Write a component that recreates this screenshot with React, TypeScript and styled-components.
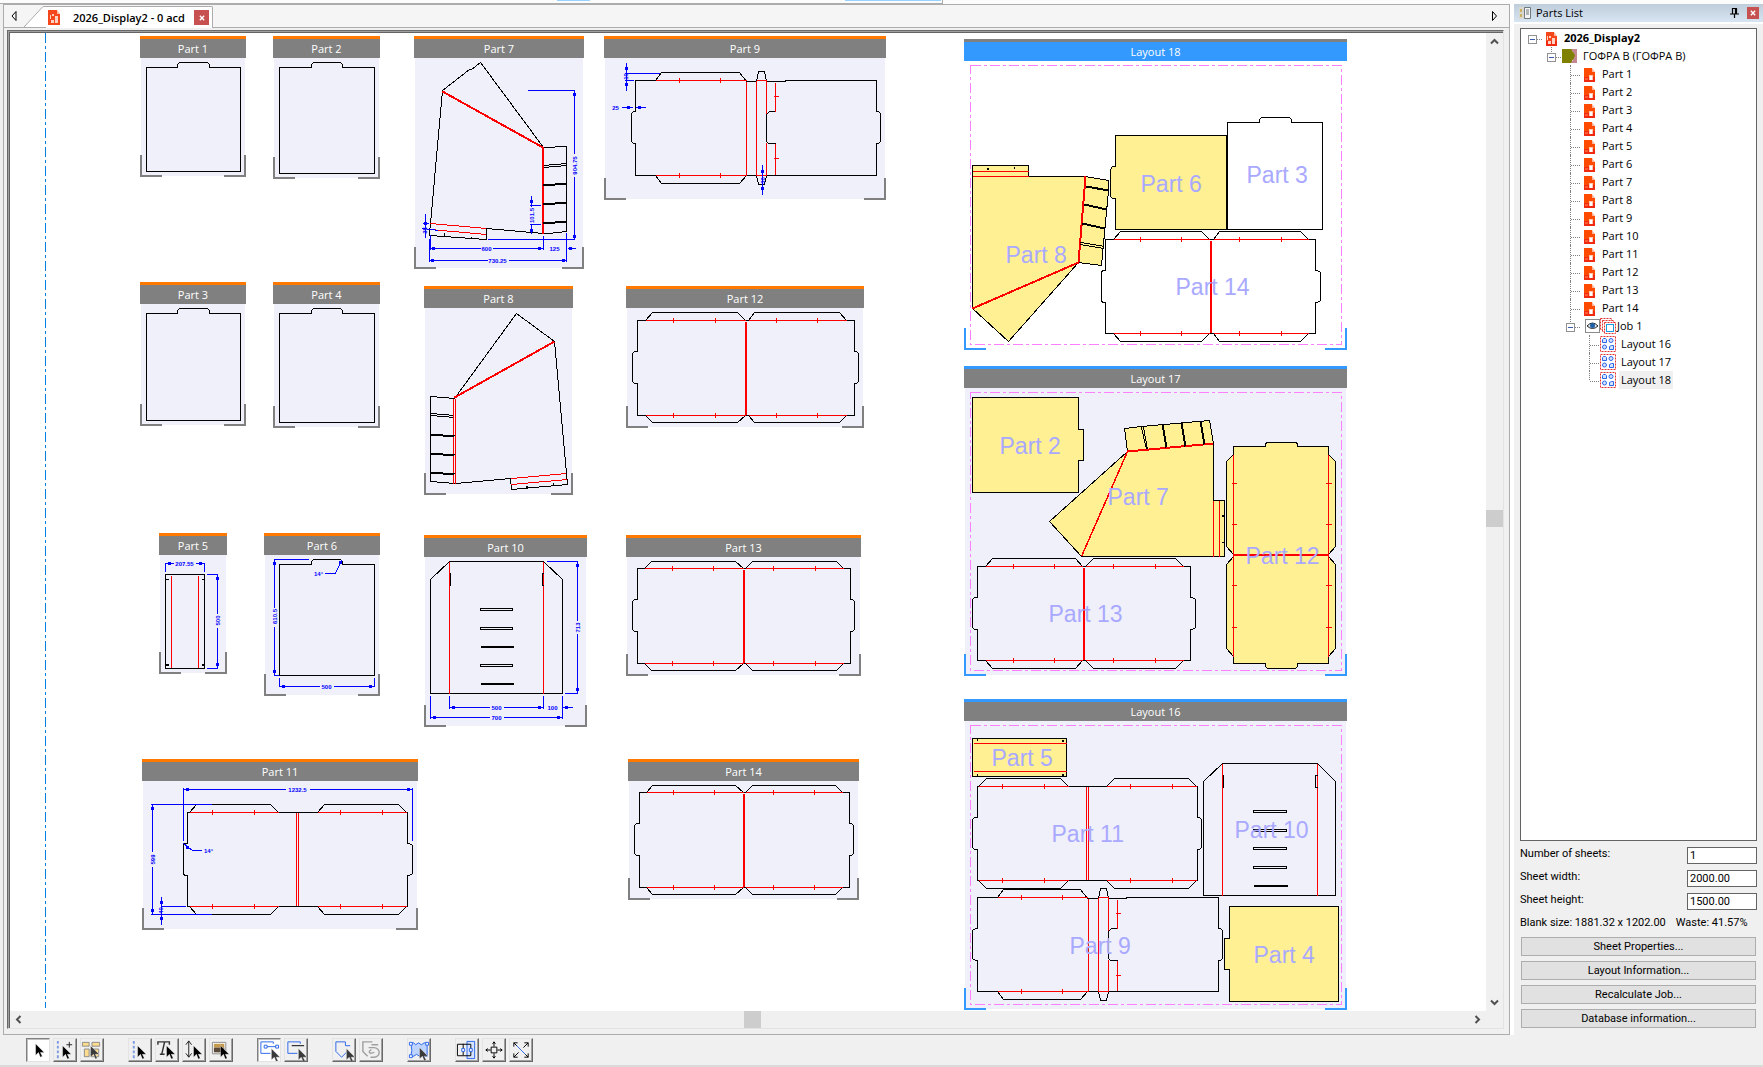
import React from "react";
import styled, { createGlobalStyle, css } from "styled-components";

const UI = `"Open Sans", "Noto Sans", sans-serif`;
const FORM = `Roboto, "Liberation Sans", sans-serif`;
const EDGE = "#acacac";
const FACE = "#f0f0f0";
const BLUE = "#3399ff";
const YELLOW = "#fff094";

const Global = createGlobalStyle`
  *, *::before, *::after { box-sizing: border-box; }
  body { margin: 0; background: ${FACE}; font: 11px/18px ${UI}; color: #000; }
  button, input { font: inherit; color: inherit; margin: 0; padding: 0; border-radius: 0; }
  ul { list-style: none; margin: 0; padding: 0; }
`;

/* ---------- window frame ---------- */

const Page = styled.div`
  display: flex;
  flex-direction: column;
  height: 100vh;
  overflow: hidden;
`;
const TopStrip = styled.div`
  flex: none;
  height: 4px;
  display: flex;
  background: #fcfcfc;
`;
const Docked = styled.div`
  flex: none;
  width: 943px;
  padding-left: 557px;
  display: flex;
  gap: 255px;
  border: solid ${EDGE};
  border-width: 0 1px 1px 0;
`;
const Hot = styled.i<{ $w: number }>`
  width: ${(p) => p.$w}px;
  height: 1px;
  background: #99d1ff;
`;
const Body = styled.div`
  flex: 1;
  min-height: 0;
  display: flex;
`;
const Doc = styled.main`
  flex: 1;
  min-width: 0;
  margin-left: 3px;
  display: flex;
  flex-direction: column;
  border: 1px solid ${EDGE};
  background: ${FACE};
`;
const TabBar = styled.div`
  flex: none;
  height: 23px;
  display: flex;
  align-items: stretch;
  padding-right: 4px;
  background: #f5f5f5;
  border-bottom: 1px solid ${EDGE};
`;
const TabArrow = styled.button`
  width: 20px;
  border: 0;
  background: none;
  display: grid;
  place-items: center;
`;
const Slant = styled.svg`
  flex: none;
  align-self: flex-end;
`;
const Tab = styled.div`
  display: flex;
  align-items: center;
  height: 22px;
  margin: 1px auto 0 0;
  padding: 0 3px 0 2px;
  background: #fff;
  border: solid ${EDGE};
  border-width: 1px 1px 0 0;
  border-radius: 0 2px 0 0;
  font-weight: 600;
`;
const TabTitle = styled.span`
  width: 121px;
  margin-left: 13px;
  white-space: nowrap;
`;
const Close = styled.button<{ $s: number }>`
  width: ${(p) => p.$s}px;
  height: ${(p) => p.$s}px;
  border: 0;
  background: #c75050;
  display: grid;
  place-items: center;
`;
const Frame = styled.div`
  flex: 1;
  min-height: 0;
  margin: 2px 5px 5px 3px;
  padding: 1px 0 0 1px;
  background: #a0a0a0;
  border: 1px solid;
  border-color: #696969 #e3e3e3 #e3e3e3 #696969;
  display: flex;
`;
const Viewport = styled.div`
  flex: 1;
  min-width: 0;
  display: grid;
  grid-template: minmax(0, 1fr) 17px / minmax(0, 1fr) 17px;
  border: solid #646464;
  border-width: 1px 0 0 1px;
  background: ${FACE};
`;
const Canvas = styled.div`
  position: relative;
  overflow: hidden;
  background: #fff;
`;
const Scroll = styled.div<{ $v?: boolean }>`
  display: flex;
  flex-direction: ${(p) => (p.$v ? "column" : "row")};
  justify-content: space-between;
  align-items: center;
  background: ${FACE};
  button {
    width: 17px;
    height: 17px;
    border: 0;
    background: none;
    display: grid;
    place-items: center;
  }
`;
const Track = styled.div<{ $v?: boolean; $at: number }>`
  flex: 1;
  align-self: stretch;
  display: flex;
  flex-direction: ${(p) => (p.$v ? "column" : "row")};
  &::before { content: ""; flex: ${(p) => p.$at}; }
  &::after { content: ""; flex: ${(p) => 1000 - p.$at}; }
`;
const Thumb = styled.i`
  flex: none;
  width: 17px;
  height: 17px;
  background: #cdcdcd;
`;

/* ---------- canvas items ---------- */

const VIEW_X = 10;
const VIEW_Y = 33;

const Guide = styled.svg`
  position: absolute;
  left: 35px;
  top: 0;
`;
const CardBox = styled.section<{ $x: number; $y: number; $w: number; $h: number }>`
  position: absolute;
  left: ${(p) => p.$x - VIEW_X}px;
  top: ${(p) => p.$y - VIEW_Y}px;
  width: ${(p) => p.$w}px;
  height: ${(p) => p.$h}px;
`;
const CardTitle = styled.h2<{ $strip: string; $bar: string }>`
  margin: 0;
  height: 22px;
  border-top: 3px solid ${(p) => p.$strip};
  background: ${(p) => p.$bar};
  color: #fff;
  font-size: 11px;
  font-weight: 400;
  line-height: 20px;
  text-align: center;
`;
const Drawing = styled.svg`
  display: block;
  shape-rendering: crispEdges;
  fill: none;
  stroke-width: 1px;
`;
const BigLabel = styled.text`
  font: 23px "Liberation Sans", Arial, sans-serif;
  fill: #a9a9ff;
  stroke: none;
`;
const TinyLabel = styled.text`
  font: bold 6px "Liberation Sans", Arial, sans-serif;
  fill: #0000ff;
  stroke: none;
  text-anchor: middle;
`;

type CardProps = {
  name: string; x: number; y: number; r: number; b: number;
  kind?: "part" | "layout" | "active"; children?: React.ReactNode;
};

function Card({ name, x, y, r, b, kind = "part", children }: CardProps) {
  const w = r - x;
  const h = b - y;
  const top = y + 22;
  const mark = kind === "part" ? "#808080" : BLUE;
  const strip = kind === "part" ? "#ff7800" : kind === "active" ? "#808080" : BLUE;
  return (
    <CardBox $x={x} $y={y} $w={w} $h={h}>
      <CardTitle $strip={strip} $bar={kind === "active" ? BLUE : "#808080"}>{name}</CardTitle>
      <Drawing width={w} height={h - 22} viewBox={`${x} ${top} ${w} ${h - 22}`}>
        <rect x={x + 1} y={top} width={w - 2} height={h - 23} fill={kind === "active" ? "#fff" : "#f0f0fa"} />
        <path
          d={`M${x + 1} ${b - 22}V${b - 1}H${x + 22}M${r - 1} ${b - 22}V${b - 1}H${r - 22}`}
          stroke={mark}
          strokeWidth={2}
        />
        <g transform="translate(.5 .5)">
          {kind !== "part" && (
            <rect x={x + 6} y={y + 26} width={371} height={b - y - 32} stroke="#ff80ff" strokeDasharray="10 3 3 3" />
          )}
          {children}
        </g>
      </Drawing>
    </CardBox>
  );
}

const K = ({ d, f }: { d: string; f?: string }) => <path d={d} stroke="#000" fill={f || "none"} />;
const K2 = ({ d }: { d: string }) => <path d={d} stroke="#000" strokeWidth={2} />;
const R = ({ d }: { d: string }) => <path d={d} stroke="#f00" />;
const R2 = ({ d }: { d: string }) => <path d={d} stroke="#f00" strokeWidth={2} />;

/* dimension lines: path, square arrow heads, values */
type Dim = { d: string; heads?: number[][]; text?: [string, number, number, boolean?][] };
function Dims({ d, heads = [], text = [] }: Dim) {
  return (
    <g>
      <path d={d} stroke="#00f" />
      {heads.map(([x, y], i) => (
        <rect key={i} x={x - 1.5} y={y - 1.5} width={3} height={3} fill="#00f" />
      ))}
      {text.map(([t, x, y, up], i) => (
        <TinyLabel key={i} transform={up ? `translate(${x + 2} ${y}) rotate(-90)` : `translate(${x} ${y + 2})`}>{t}</TinyLabel>
      ))}
    </g>
  );
}

/* rectangular blank with one rounded tab on its top edge */
function Blank({ l, t, r, b, a, z }: { l: number; t: number; r: number; b: number; a: number; z: number }) {
  return <K d={`M${l} ${t}H${a}V${t - 3}L${a + 2} ${t - 5}H${z - 2}L${z} ${t - 3}V${t}H${r}V${b}H${l}Z`} />;
}

/* blank made of two panels with flaps above and below */
type Double = {
  x: [number, number, number, number]; y: [number, number, number, number, number, number];
  flaps: number[]; ticks: number[]; mid: number; gap?: boolean;
};
function DoublePanel({ x: [tl, l, r, tr], y: [ft, t, a, z, b, fb], flaps: f, ticks, mid, gap }: Double) {
  return (
    <g>
      <K d={`M${f[0]} ${t}H${l}V${a}H${l - 3}L${tl} ${a + 2}V${z - 2}L${l - 3} ${z}H${l}V${b}H${f[0]}`} />
      <K d={`M${f[7]} ${t}H${r}V${a}H${r + 2}L${tr} ${a + 2}V${z - 2}L${r + 2} ${z}H${r}V${b}H${f[7]}`} />
      <K d={`M${f[0]} ${t}L${f[1]} ${ft}H${f[2]}L${f[3]} ${t}H${f[4]}L${f[5]} ${ft}H${f[6]}L${f[7]} ${t}`} />
      <K d={`M${f[0]} ${b}L${f[1]} ${fb}H${f[2]}L${f[3]} ${b}H${f[4]}L${f[5]} ${fb}H${f[6]}L${f[7]} ${b}`} />
      <R d={`M${f[0]} ${t}H${f[3]}M${f[4]} ${t}H${f[7]}M${f[0]} ${b}H${f[3]}M${f[4]} ${b}H${f[7]}`} />
      <R d={ticks.map((v) => `M${v} ${t - 3}v5M${v} ${b - 3}v5`).join("")} />
      {gap ? <R d={`M${mid} ${t}V${b - 1}M${mid + 2} ${t}V${b - 1}`} /> : <R2 d={`M${mid + 0.5} ${t + 1}V${b - 1}`} />}
    </g>
  );
}

type Spine = { t: number; l: number; tl: number; r: number; tr: number; b: number; c: number[]; f: number[]; ticks: number[]; step: number };
/* two panels joined by a narrow spine */
function SpinePanel({ t, l, tl, r, tr, b, c, f, ticks, step }: Spine) {
  const a = t + 31;
  const z = t + 63;
  const [c1, c2, c3, c4] = c;
  return (
    <g>
      <K d={`M${f[0]} ${t}H${l}V${a}H${l - 2}L${tl} ${a + 2}V${z - 2}L${l - 2} ${z}H${l}V${b}H${f[0]}L${f[1]} ${b + 8}H${f[2]}L${f[3]} ${b}H${c2}l2 9h6L${c3} ${b}H${step}H${r}V${z}H${r + 2}L${tr} ${z - 2}V${a + 2}L${r + 2} ${a}H${r}V${t}H${step}V${t + 1}H${c3}l-2 -10h-6L${c2} ${t + 1}H${f[3]}L${f[2]} ${t - 8}H${f[1]}Z`} />
      <K d={`M${c4} ${a}H${c3 + 3}L${c3} ${a + 3}V${z - 2}L${c3 + 2} ${z}H${c4}`} />
      <R d={`M${f[0]} ${t}H${f[3]}M${f[0]} ${b}H${f[3]}M${c1} ${t + 1}V${b}M${c2} ${t}V${b}M${c3} ${t}V${a + 2}M${c3} ${z - 1}V${b}M${c2} ${t}H${c3}M${c2} ${b}H${c3}M${c4} ${t + 2}V${a}M${c4} ${z}V${b - 1}M${c4 - 2} ${t + 16}h5M${c4 - 2} ${t + 78}h5`} />
      <R d={ticks.map((v) => `M${v} ${t - 3}v5M${v} ${b - 3}v5`).join("")} />
    </g>
  );
}

/* ---------- glyphs ---------- */

const PageGlyph = ({ root }: { root?: boolean }) => (
  <svg width="18" height="18" viewBox="0 0 18 18" aria-hidden="true">
    <path d="M4 3h8v4h3v10H4z" fill={root ? "#f4481c" : "#ff4a00"} />
    <path d="M4 12h11v5H4z" fill="#f02a10" />
    <path d="M12 3l3 4h-3z" fill="#ffb49b" />
    {root ? (
      <path d="M5 7h1v4H5zM7 7h2v2H7zM6 12h3v3H6zM10 9h3v6h-3z" fill="#ffd2c4" />
    ) : (
      <>
        <path d="M9 10h4v5H9z" fill="#ffc8b4" />
        <path d="M10 11h2v4h-2z" fill="#fff" />
        <path d="M5 13h3v2H5z" fill="#ff5a30" />
      </>
    )}
  </svg>
);
const BoardGlyph = () => (
  <svg width="18" height="18" viewBox="0 0 18 18" aria-hidden="true">
    <path d="M10 3h6M12 5h4M11 7h5M12 9h4M12 11h4M12 13h4M10 15h6" stroke="#8b1020" strokeWidth="1" />
    <path d="M1 2h9l2 3 2 3-1 3-2 3-1 2H1z" fill="#808000" />
  </svg>
);
const EyeGlyph = () => (
  <svg width="20" height="18" viewBox="0 0 20 18" aria-hidden="true">
    <rect x="5.500" y="2.500" width="14" height="13" fill="#fff" stroke="#8a8a8a" />
    <path d="M7 9q5.500-6 11 0q-5.500 5-11 0z" fill="#dfe9f2" stroke="#222" />
    <circle cx="12.500" cy="8.500" r="2.500" fill="#1f5fa8" />
  </svg>
);
const JobGlyph = () => (
  <svg width="17" height="18" viewBox="0 0 17 18" aria-hidden="true">
    <g fill="#fff" stroke="#e03030" strokeDasharray="2 1">
      <rect x="0.500" y="1.500" width="11" height="11" />
      <rect x="2.500" y="3.500" width="11" height="11" />
      <rect x="4.500" y="5.500" width="11" height="11" />
    </g>
    <rect x="6.500" y="7.500" width="7" height="7" fill="#fff" stroke="#1a9be0" />
  </svg>
);
const LayoutGlyph = () => (
  <svg width="18" height="18" viewBox="0 0 18 18" aria-hidden="true">
    <rect x="1.500" y="1.500" width="15" height="15" fill="#fff" stroke="#e03030" strokeDasharray="2 1" />
    <g fill="#d5e3ff" stroke="#2a66e8">
      <path d="M3.500 7.500v-3l1-1h2l1 1v3z" />
      <circle cx="12" cy="5.500" r="2" />
      <circle cx="5.500" cy="12" r="2" />
      <path d="M10.500 14.500v-3l2-1h2v4z" />
    </g>
  </svg>
);
const Cross = ({ s = 7 }: { s?: number }) => (
  <svg width={s} height={s} viewBox="0 0 7 7" aria-hidden="true">
    <path d="M1 1l5 5M6 1l-5 5" stroke="#fff" strokeWidth="1.600" />
  </svg>
);
const Chevron = ({ turn }: { turn: number }) => (
  <svg width="9" height="9" viewBox="0 0 9 9" aria-hidden="true">
    <path d="M1 6.500l3.500-3.500 3.500 3.500" transform={`rotate(${turn} 4.500 4.500)`} fill="none" stroke="#505050" strokeWidth="2" />
  </svg>
);
const Tri = ({ flip }: { flip?: boolean }) => (
  <svg width="6" height="10" viewBox="0 0 6 10" aria-hidden="true">
    <path d={flip ? "M.5 .5l4 4.500-4 4.500z" : "M5 .5L1 5l4 4.500z"} fill="none" stroke="#000" />
  </svg>
);

/* ---------- parts list ---------- */

const Side = styled.aside`
  flex: none;
  width: 253px;
  display: flex;
  flex-direction: column;
  border-left: 4px solid #fff;
`;
const SideHead = styled.header`
  flex: none;
  height: 20px;
  display: flex;
  align-items: center;
  padding: 0 4px 0 5px;
  background: linear-gradient(#bfcddb, #d7e4f2);
  border-bottom: 2px solid #fff;
`;
const SideTitle = styled.h1`
  margin: 0 auto 0 5px;
  font-size: 11px;
  font-weight: 400;
`;
const PinButton = styled.button`
  width: 12px;
  height: 14px;
  margin-right: 7px;
  border: 0;
  background: none;
  line-height: 0;
`;
const Tree = styled.ul`
  flex: 1;
  min-height: 0;
  margin: 4px 6px 6px;
  padding-left: 2px;
  border: 1px solid #646464;
  background: #fff;
`;
const Node = styled.li<{ $level: number }>`
  display: flex;
  height: 18px;
  padding-left: ${(p) => p.$level * 19}px;
`;
const Link = styled.span<{ $line: "none" | "half" | "full" }>`
  position: relative;
  width: 19px;
  flex: none;
  display: grid;
  place-items: center;
  &::before {
    content: "";
    position: absolute;
    left: 9px;
    top: 0;
    height: ${(p) => (p.$line === "full" ? 18 : p.$line === "half" ? 9 : 0)}px;
    border-left: 1px dotted #808080;
  }
  &::after {
    content: "";
    position: absolute;
    left: 10px;
    right: 0;
    top: 10px;
    border-top: 1px dotted #808080;
  }
`;
const Expander = styled.button`
  position: relative;
  z-index: 1;
  width: 9px;
  height: 9px;
  margin-top: 2px;
  border: 1px solid #919191;
  background: #fff;
  &::before {
    content: "";
    display: block;
    width: 5px;
    margin: 0 auto;
    border-top: 1px solid #3b5ca8;
  }
`;
const NodeText = styled.span<{ $bold?: boolean; $on?: boolean; $tight?: boolean }>`
  padding: ${(p) => (p.$tight ? "0" : "0 2px")};
  margin-left: ${(p) => (p.$tight ? 0 : 2)}px;
  white-space: nowrap;
  ${(p) => p.$bold && css`font-weight: 700;`}
  ${(p) => p.$on && css`background: ${FACE};`}
`;
const Form = styled.form`
  flex: none;
  padding: 0 6px 2px;
  font-family: ${FORM};
`;
const Field = styled.label`
  display: flex;
  justify-content: space-between;
  height: 23px;
  line-height: 14px;
  input {
    width: 70px;
    height: 17px;
    padding: 0 2px;
    border: 1px solid #646464;
    background: #fff;
  }
`;
const Stats = styled.div`
  display: flex;
  gap: 10px;
  height: 21px;
  line-height: 14px;
  white-space: nowrap;
`;
const Push = styled.button`
  display: block;
  width: calc(100% - 2px);
  height: 19px;
  border: 1px solid #adadad;
  background: #e1e1e1;
  line-height: 17px;
  && { margin: 0 1px 5px; }
`;

/* ---------- bottom toolbar ---------- */

const Toolbar = styled.div`
  flex: none;
  height: 32px;
  display: flex;
  gap: 24px;
  padding: 3px 0 0 26px;
  border-bottom: 2px solid #dadada;
`;
const Group = styled.div`
  display: flex;
  gap: 3px;
`;
const Tool = styled.button<{ $on?: boolean }>`
  width: 24px;
  height: 24px;
  border: 1px solid;
  border-color: ${(p) => (p.$on ? "#808080 #e3e3e3 #e3e3e3 #808080" : "#e3e3e3 #696969 #696969 #e3e3e3")};
  box-shadow: inset ${(p) => (p.$on ? "1px 1px 0 #c0c0c0" : "-1px -1px 0 #a0a0a0")};
  background: ${(p) => (p.$on ? "#fff" : FACE)};
  line-height: 0;
`;

const Cursor = ({ x = 0, y = 0, gray }: { x?: number; y?: number; gray?: boolean }) => (
  <path transform={`translate(${x} ${y})`} d="M9 5v12l3-3 2 5 2-1-2-4h4z" fill={gray ? "#3a3a3a" : "#000"} stroke="#fff" strokeWidth=".4" />
);
const tools: { name: string; on?: boolean; art: React.ReactNode }[][] = [
  [
    { name: "Select", on: true, art: <Cursor /> },
    { name: "Add to selection", art: <><path d="M4 2v19" stroke="#7c9be0" strokeWidth="2" strokeDasharray="3 2" /><Cursor y={2} /><path d="M16 3v6M13 6h6" stroke="#222" /></> },
    { name: "Select parts", art: <><g fill="#fddc8c" stroke="#8a8a8a"><path d="M1.500 3.500h7v4h-7zM11.500 3.500h8v4h-8zM3.500 10.500h5v8h-5zM10.500 10.500h8v8h-8z" /></g><Cursor x={1} y={2} gray /></> },
  ],
  [
    { name: "Select lines", art: <><path d="M5 2v19" stroke="#7c9be0" strokeWidth="2" strokeDasharray="3 2" /><Cursor y={2} /></> },
    { name: "Select text", art: <><path d="M2 6V3h12v3M9 3L6 16M4 16h5" stroke="#333" strokeWidth="1.500" fill="none" /><Cursor x={2} y={2} /></> },
    { name: "Select dimensions", art: <><path d="M6 2v17M3 6l3-4 3 4M3 15l3 4 3-4" stroke="#222" fill="none" /><Cursor x={2} y={2} /></> },
    { name: "Select pictures", art: <><path d="M2.500 3.500h14v12h-14z" fill="#fff" stroke="#888" /><path d="M4 5h11v4H4z" fill="#c69a4c" /><path d="M4 9h11v5H4z" fill="#5a4a3a" /><Cursor x={2} y={2} /></> },
  ],
  [
    { name: "Pick edge", on: true, art: <><path d="M16 5V3H3v12h10" stroke="#2a66e8" fill="none" /><path d="M8 8h12" stroke="#2a66e8" /><path d="M6.500 6.500h3v3h-3zM18.500 6.500h3v3h-3z" fill="#fff" stroke="#2a66e8" /><Cursor x={5} y={5} gray /></> },
    { name: "Pick line", art: <><path d="M16 5V3H3v12h10" stroke="#2a66e8" fill="none" /><path d="M7 7h13" stroke="#000" /><Cursor x={5} y={5} gray /></> },
  ],
  [
    { name: "Pick contour", art: <><path d="M13 7V3H3v10l6 6 5-5M13 7h5" stroke="#2a66e8" fill="none" /><Cursor x={5} y={5} gray /></> },
    { name: "Reverse contour", art: <path d="M13 3H3v10l5 5M12 6h7M9 9h6q5 1 5 5t-5 5h-4M12 11q-4 2-1 4l4-1" stroke="#a0a0a0" fill="none" strokeWidth="1.500" /> },
  ],
  [{ name: "Select area", art: <><path d="M3 4h3l2 2 3-2 3 2 3-2h3v14h-3l-2-2-3 2-3-2-3 2H3l1-6z" fill="#bcd4ff" stroke="#2a66e8" /><path d="M1.500 3.500h3v3h-3zM18.500 3.500h3v3h-3zM1.500 16.500h3v3h-3z" fill="#fff" stroke="#2a66e8" /><Cursor x={3} y={4} gray /></> }],
  [
    { name: "Fit selection", art: <><path d="M11.500 2.500h8v18h-8z" fill="#d5e3ff" stroke="#2a66e8" /><path d="M1.500 5.500h14v12h-14zM7.500 5v12" fill="none" stroke="#000" /><path d="M6 10h3v3H6zM14 10h3v3h-3z" fill="#fff" stroke="#2a66e8" /></> },
    { name: "Center view", art: <><path d="M8.500 8.500h6v6h-6z" fill="none" stroke="#000" /><path d="M11.500 3v5M11.500 15v5M3 11.500h5M15 11.500h5M10 5l1.500-2 1.500 2M10 18l1.500 2 1.500-2M5 10l-2 1.500 2 1.500M18 10l2 1.500-2 1.500" fill="none" stroke="#000" /></> },
    { name: "Fit all", art: <><path d="M6 6l10 10" stroke="#2a66e8" /><path d="M4 8V4h4M15 4h4v4M4 15v4h4M19 15v4h-4M4 4l3 3M19 4l-5 5M4 19l5-5M19 19l-3-3" fill="none" stroke="#000" /></> },
  ],
];

const partNames = Array.from({ length: 14 }, (_, i) => `Part ${i + 1}`);

function Cards() {
  return (
    <>
      <Card name="Part 1" x={140} y={36} r={246} b={177}><Blank l={146} t={67} r={240} b={171} a={177} z={209} /></Card>
      <Card name="Part 2" x={273} y={36} r={380} b={179}><Blank l={279} t={67} r={374} b={173} a={311} z={342} /></Card>
      <Card name="Part 3" x={140} y={282} r={246} b={426}><Blank l={146} t={313} r={240} b={420} a={177} z={209} /></Card>
      <Card name="Part 4" x={273} y={282} r={380} b={428}><Blank l={279} t={313} r={374} b={422} a={311} z={342} /></Card>

      <Card name="Part 7" x={414} y={36} r={584} b={269}>
        <K d="M442 90L469 69L471 69L480 62L543 147L566 146V231L548 233L543 233L486 228V239L429 235V233L430 223Z" />
        <K d="M543 165L566 163M543 167L566 165M444 232v4M471 236v2" />
        <R d="M430 223L486 228M430 229L486 234" />
        <R2 d="M442 91L542.500 147V233" />
        <K2 d="M543 185L566 183M543 204L566 202M543 223L566 221" />
        <Dims
          d="M527 90H574V153M574 176V239H487M430 234V249M543 235V249M430 248H480M492 248H543M567 248H575M429 238V261M566 232V261M429 260H487M508 260H566M425 213V237M422 223H428M422 228L438 230M531 195V206M529 205H540M529 224H540M531 224V233"
          heads={[[574, 94], [574, 236], [433, 248], [539, 248], [570, 248], [432, 260], [563, 260], [425, 223], [531, 201], [531, 230]]}
          text={[["600", 486, 248], ["125", 554, 248], ["730.25", 497, 260], ["904.75", 574, 165, true], ["101.5", 531, 215, true], ["35", 424, 230, true]]}
        />
      </Card>

      <Card name="Part 9" x={604} y={36} r={886} b={200}>
        <SpinePanel t={80} l={635} tl={631} r={876} tr={880} b={175} c={[746, 756, 766, 775]} f={[655, 661, 739, 746]} ticks={[679, 720]} step={785} />
        <Dims
          d="M626 62V90M624 73H659M624 80H633M621 107H632M635 107H645M762 164V194"
          heads={[[626, 68], [626, 84], [628, 107], [639, 107], [762, 171], [762, 188]]}
          text={[["10", 625, 76, true], ["25", 615, 107], ["30", 762, 180, true]]}
        />
      </Card>

      <Card name="Part 8" x={424} y={286} r={573} b={495}>
        <K d="M516 313L554 341L566 473L567 484L511 489L510 478L455 483L430 481V396L454 398Z" />
        <K d="M430 413L454 415M430 415L454 417M553 482v3" />
        <R d="M511 478L566 473M511 484L567 479M453 398V483M455 398V483" />
        <R2 d="M454 397L554 341" />
        <K2 d="M430 434L454 436M430 453L454 455M430 472L454 474M526 485v3" />
      </Card>

      <Card name="Part 12" x={626} y={286} r={864} b={428}>
        <DoublePanel x={[632, 637, 854, 858]} y={[312, 320, 351, 383, 415, 422]} flaps={[645, 652, 737, 745, 748, 754, 839, 846]} ticks={[673, 715, 776, 817]} mid={745} />
      </Card>

      <Card name="Part 5" x={159} y={533} r={227} b={674}>
        <K d="M165 574H204V668H165ZM165 579h3M201 579h3" />
        <K2 d="M165 664h3M201 664h3" />
        <R d="M171 575V667M198 575V667" />
        <Dims
          d="M165 571V562M204 571V562M165 563H173M195 563H204M206 574H217V613M217 627V668H206"
          heads={[[169, 563], [200, 563], [217, 578], [217, 664]]}
          text={[["207.55", 184, 563], ["500", 217, 620, true]]}
        />
      </Card>

      <Card name="Part 6" x={264} y={533} r={380} b={696}>
        <Blank l={279} t={564} r={374} b={675} a={311} z={342} />
        <Dims
          d="M308 559H273M274 559V607M274 626V675H278M279 677V686H319M333 686H374V677M341 560L335 573H324"
          heads={[[274, 563], [274, 671], [283, 686], [370, 686], [340, 562]]}
          text={[["610.5", 274, 616, true], ["500", 326, 686], ["14°", 318, 573]]}
        />
      </Card>

      <Card name="Part 10" x={424} y={535} r={587} b={727}>
        <K d="M449 561H543L562 579V693H430V579Z" />
        <R d="M449 561V693M543 561V693" />
        <K d="M449 573h1v12h-1M543 573h-1v12h1M480 608h32v2h-32zM480 627h32v2h-32zM480 664h32v2h-32z" />
        <K2 d="M480 646.500h33M480 683.500h33" />
        <Dims
          d="M546 561H577V620M577 633V693H564M449 695V708M543 695V708M449 707H489M503 707H543M562 707H572M430 695V718M562 695V718M430 717H489M503 717H562"
          heads={[[577, 565], [577, 689], [453, 707], [539, 707], [566, 707], [434, 717], [558, 717]]}
          text={[["500", 496, 707], ["100", 552, 707], ["700", 496, 717], ["713", 577, 627, true]]}
        />
      </Card>

      <Card name="Part 13" x={626} y={535} r={861} b={676}>
        <DoublePanel x={[632, 637, 850, 854]} y={[561, 568, 599, 631, 663, 670]} flaps={[644, 651, 735, 743, 745, 752, 836, 843]} ticks={[672, 713, 773, 815]} mid={743} />
      </Card>

      <Card name="Part 11" x={142} y={759} r={418} b={930}>
        <DoublePanel gap x={[183, 187, 407, 412]} y={[804, 812, 843, 875, 906, 914]} flaps={[189, 196, 270, 278, 317, 324, 398, 406]} ticks={[212, 254, 340, 382]} mid={296} />
        <K d="M278 812H317M278 906H317" />
        <Dims
          d="M183 840V787M412 840V787M183 789H285M309 789H412M211 804H150M152 804V851M152 866V914M150 914H211M161 896V924M160 906H185M183 843L192 850H201"
          heads={[[187, 789], [408, 789], [152, 808], [152, 910], [161, 902], [161, 918], [187, 847]]}
          text={[["1232.5", 297, 789], ["599", 152, 859, true], ["40", 160, 910, true], ["14°", 208, 850]]}
        />
      </Card>

      <Card name="Part 14" x={628} y={759} r={859} b={900}>
        <DoublePanel x={[634, 639, 849, 853]} y={[785, 792, 823, 855, 887, 894]} flaps={[646, 652, 735, 743, 745, 752, 835, 842]} ticks={[673, 714, 773, 814]} mid={743} />
      </Card>

      <Card name="Layout 18" kind="active" x={964} y={39} r={1347} b={350}>
        <K f={YELLOW} d="M972 165H1028V176H1085L1108 180V190L1101 265L1078 262L1008 341L972 308Z" />
        <R d="M972 171H1028M972 176H1028" />
        <R2 d="M1085 176L1078 262L972 308" />
        <K2 d="M1086 186L1108 190M1084 204L1106 209M1082 223L1104 228M987 167v2" />
        <K d="M1080 242L1104 246M1080 244L1103 248M1014 166v2" />
        <K f={YELLOW} d="M1115 135H1226V229H1115V198H1112L1110 196V169L1112 166H1115Z" />
        <K f="#fff" d="M1227 122H1259V119L1261 117H1289L1291 119V122H1322V229H1227Z" />
        <DoublePanel x={[1101, 1105, 1315, 1320]} y={[231, 239, 270, 302, 333, 341]} flaps={[1113, 1120, 1201, 1209, 1213, 1219, 1300, 1308]} ticks={[1140, 1181, 1239, 1281]} mid={1210} />
        <BigLabel x={1005} y={262}>Part 8</BigLabel>
        <BigLabel x={1140} y={191}>Part 6</BigLabel>
        <BigLabel x={1246} y={182}>Part 3</BigLabel>
        <BigLabel x={1175} y={294}>Part 14</BigLabel>
      </Card>

      <Card name="Layout 17" kind="layout" x={964} y={366} r={1347} b={676}>
        <K f={YELLOW} d="M972 397H1078V429H1083V460H1078V492H972Z" />
        <K f={YELLOW} d="M1049 521L1127 451L1124 428L1141 426L1209 420L1213 443V500H1224V556H1081Z" />
        <R d="M1213 500V556M1219 500V556" />
        <path d="M1127 451L1081 556" stroke="#f00" strokeWidth={1.5} />
        <R2 d="M1127 451L1213 443" />
        <K d="M1141 427L1146 449M1143 427L1147 449M1221 542h3" />
        <K2 d="M1162 424L1166 447M1181 423L1185 446M1200 421L1204 444M1221 515h3" />
        <K f={YELLOW} d="M1233 446H1265V443L1267 442H1295L1297 443V446H1328V454L1335 461V546L1328 554V556L1335 564V648L1328 656V663H1297V666L1295 668H1267L1265 666V663H1233V656L1226 648V564L1233 556V554L1226 546V461L1233 454Z" />
        <R d="M1233 454V656M1328 454V656" />
        <R d={[483, 524, 585, 627].map((v) => `M1231 ${v}h5M1325 ${v}h6`).join("")} />
        <R2 d="M1233 554.500H1328" />
        <DoublePanel x={[972, 977, 1190, 1195]} y={[558, 566, 597, 629, 660, 668]} flaps={[985, 992, 1075, 1082, 1085, 1093, 1175, 1183]} ticks={[1013, 1054, 1113, 1155]} mid={1083} />
        <BigLabel x={999} y={453}>Part 2</BigLabel>
        <BigLabel x={1107} y={504}>Part 7</BigLabel>
        <BigLabel x={1245} y={563}>Part 12</BigLabel>
        <BigLabel x={1048} y={621}>Part 13</BigLabel>
      </Card>

      <Card name="Layout 16" kind="layout" x={964} y={699} r={1347} b={1010}>
        <K f={YELLOW} d="M972 738H1066V776H972Z" />
        <R d="M973 743H1066M973 771H1066" />
        <K d="M977 738v2M977 773v2" />
        <K2 d="M1062 739v2M1062 773v2" />
        <DoublePanel gap x={[972, 977, 1197, 1201]} y={[778, 786, 817, 849, 880, 888]} flaps={[978, 986, 1060, 1068, 1106, 1114, 1188, 1196]} ticks={[1002, 1044, 1130, 1172]} mid={1086} />
        <K d="M1068 786H1106M1068 880H1106" />
        <K d="M1222 763H1317L1335 781V895H1203V781Z" />
        <R d="M1222 763V895M1317 763V895" />
        <K d="M1222 775h1v12h-1M1317 775h-2v12h2M1253 810h33v2h-33zM1253 829h33v2h-33zM1253 847h33v2h-33zM1253 866h33v2h-33z" />
        <K2 d="M1253 885.500h34" />
        <SpinePanel t={897} l={977} tl={972} r={1218} tr={1222} b={991} c={[1088, 1098, 1108, 1117]} f={[997, 1003, 1080, 1087]} ticks={[1021, 1062]} step={1126} />
        <K f={YELLOW} d="M1229 906H1338V1001H1229V969H1224V938H1229Z" />
        <BigLabel x={991} y={765}>Part 5</BigLabel>
        <BigLabel x={1051} y={841}>Part 11</BigLabel>
        <BigLabel x={1234} y={837}>Part 10</BigLabel>
        <BigLabel x={1069} y={953}>Part 9</BigLabel>
        <BigLabel x={1253} y={962}>Part 4</BigLabel>
      </Card>
    </>
  );
}

function PartsTree() {
  return (
    <Tree>
      <Node $level={0}>
        <Link $line="none"><Expander aria-label="Collapse project" /></Link>
        <PageGlyph root />
        <NodeText $bold>2026_Display2</NodeText>
      </Node>
      <Node $level={1}>
        <Link $line="half"><Expander aria-label="Collapse material" /></Link>
        <BoardGlyph />
        <NodeText>ГОФРА В (ГОФРА В)</NodeText>
      </Node>
      {partNames.map((n) => (
        <Node key={n} $level={2}>
          <Link $line="full" />
          <PageGlyph />
          <NodeText>{n}</NodeText>
        </Node>
      ))}
      <Node $level={2}>
        <Link $line="half"><Expander aria-label="Collapse job" /></Link>
        <EyeGlyph />
        <JobGlyph />
        <NodeText $tight>Job 1</NodeText>
      </Node>
      {["Layout 16", "Layout 17", "Layout 18"].map((n, i) => (
        <Node key={n} $level={3}>
          <Link $line={i === 2 ? "half" : "full"} />
          <LayoutGlyph />
          <NodeText $on={i === 2}>{n}</NodeText>
        </Node>
      ))}
    </Tree>
  );
}

export default function App() {
  return (
    <Page>
      <Global />
      <TopStrip>
        <Docked><Hot $w={33} /><Hot $w={96} /></Docked>
      </TopStrip>
      <Body>
        <Doc>
          <TabBar>
            <TabArrow aria-label="Previous tab"><Tri /></TabArrow>
            <Slant width="22" height="21" viewBox="0 0 22 21" aria-hidden="true">
              <path d="M0 21L19 0H22V21Z" fill="#fff" />
              <path d="M0 21L19 .5H22" fill="none" stroke={EDGE} />
            </Slant>
            <Tab>
              <svg width="12" height="15" viewBox="0 0 12 15" aria-hidden="true">
                <path d="M0 0h9v4h3v11H0z" fill="#f4481c" />
                <path d="M9 0l3 4H9z" fill="#ffb49b" />
                <path d="M2 5h1v4H2zM4 4h2v2H4zM3 10h3v3H3zM7 6h3v7H7z" fill="#ffd2c4" />
              </svg>
              <TabTitle>2026_Display2 - 0 acd</TabTitle>
              <Close $s={15} aria-label="Close tab"><Cross s={6} /></Close>
            </Tab>
            <TabArrow aria-label="Next tab"><Tri flip /></TabArrow>
          </TabBar>
          <Frame>
            <Viewport>
              <Canvas>
                <Guide width="1" height="975"><path d="M.5 0V975" stroke="#0080e0" strokeDasharray="10 3 3 3" /></Guide>
                <Cards />
              </Canvas>
              <Scroll $v>
                <button aria-label="Scroll up"><Chevron turn={0} /></button>
                <Track $v $at={496}><Thumb /></Track>
                <button aria-label="Scroll down"><Chevron turn={180} /></button>
              </Scroll>
              <Scroll>
                <button aria-label="Scroll left"><Chevron turn={-90} /></button>
                <Track $at={503}><Thumb /></Track>
                <button aria-label="Scroll right"><Chevron turn={90} /></button>
              </Scroll>
              <span />
            </Viewport>
          </Frame>
        </Doc>
        <Side>
          <SideHead>
            <svg width="12" height="12" viewBox="0 0 12 12" aria-hidden="true">
              <path d="M0 0h5v12H0z" fill="#d8d8d0" />
              <path d="M1 2h2v3H1zM1 7h2v3H1z" fill="#c8b060" />
              <path d="M5.500 .5h6v11h-6z" fill="#f4f4f4" stroke="#707880" />
              <path d="M7 3h3M7 5h3M7 7h3" stroke="#707880" />
            </svg>
            <SideTitle>Parts List</SideTitle>
            <PinButton aria-label="Pin panel">
              <svg width="9" height="10" viewBox="0 0 9 10"><path d="M2.500 5.500v-5h4v5M5.500 1v5M0 6h9M4.500 6v4" fill="none" stroke="#000" strokeWidth="1.200" /></svg>
            </PinButton>
            <Close $s={12} aria-label="Close panel"><Cross s={6} /></Close>
          </SideHead>
          <PartsTree />
          <Form onSubmit={(e) => e.preventDefault()}>
            <Field>Number of sheets:<input defaultValue="1" /></Field>
            <Field>Sheet width:<input defaultValue="2000.00" /></Field>
            <Field>Sheet height:<input defaultValue="1500.00" /></Field>
            <Stats><span>Blank size: 1881.32 x 1202.00</span><span>Waste: 41.57%</span></Stats>
            <Push type="button">Sheet Properties...</Push>
            <Push type="button">Layout Information...</Push>
            <Push type="button">Recalculate Job...</Push>
            <Push type="button">Database information...</Push>
          </Form>
        </Side>
      </Body>
      <Toolbar>
        {tools.map((g, i) => (
          <Group key={i}>
            {g.map((t) => (
              <Tool key={t.name} $on={t.on} aria-label={t.name}>
                <svg width="22" height="22" viewBox="0 0 23 23">{t.art}</svg>
              </Tool>
            ))}
          </Group>
        ))}
      </Toolbar>
    </Page>
  );
}
